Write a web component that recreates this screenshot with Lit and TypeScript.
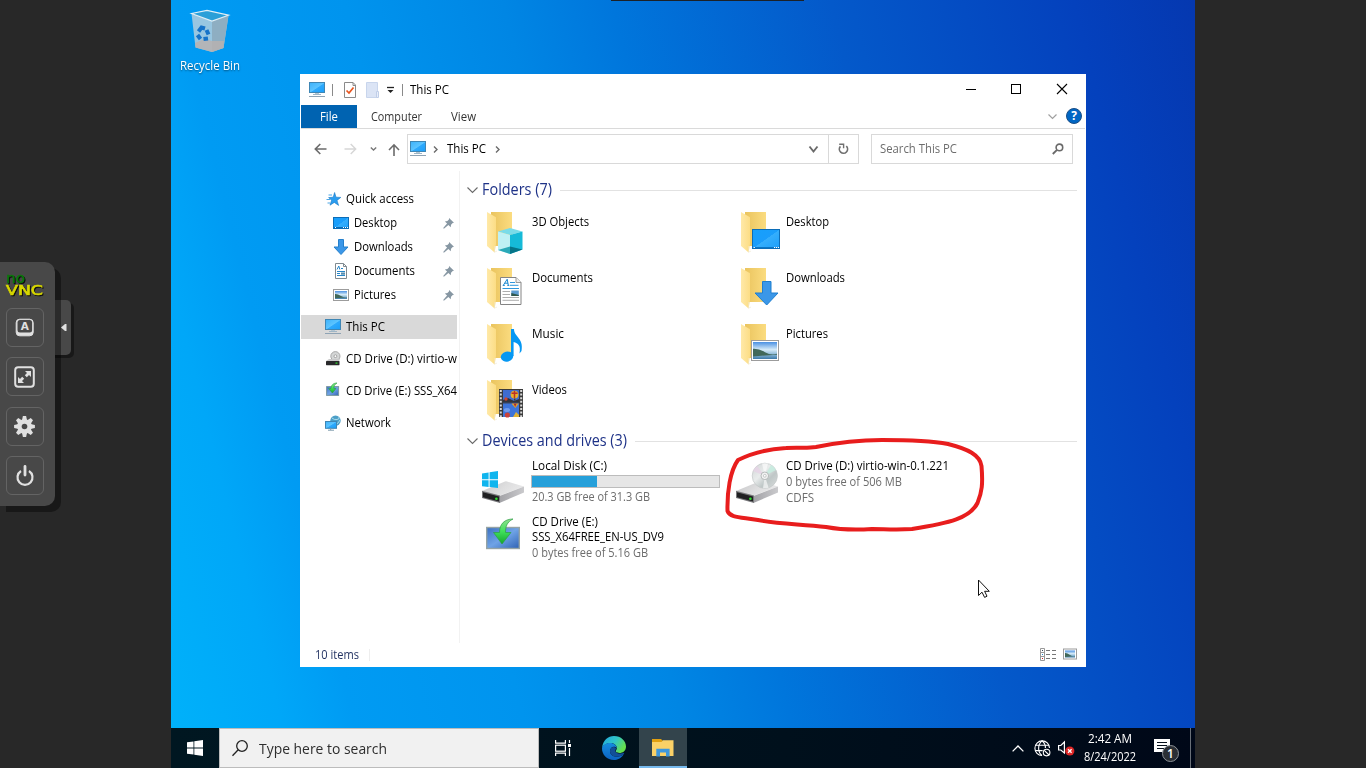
import { LitElement, html, svg, css } from "lit";
import { customElement, property } from "lit/decorators.js";

/** Text label condensed horizontally so that it occupies the given width. */
@customElement("ui-label")
class UiLabel extends LitElement {
  @property() text = "";
  @property({ type: Number }) w = 0;
  static styles = css`
    :host { display: inline-block; white-space: pre; }
    div { display: flex; justify-content: flex-start; }
    span { flex: none; transform-origin: 0 50%; }
  `;
  render() { return html`<div style="width:${this.w}px"><span>${this.text}</span></div>`; }
  updated() {
    const s = this.renderRoot.querySelector("span") as HTMLElement;
    s.style.transform = "none";
    const n = s.getBoundingClientRect().width;
    if (this.w && n) s.style.transform = `scaleX(${this.w / n})`;
  }
}

const L = (text: string, w: number) => html`<ui-label .text=${text} .w=${w}></ui-label>`;

const folderBack = svg`
  <path d="M11 4H32V38H11z" fill="url(#fb)"/>
  <path d="M7 4L16 9.2V36L14.6 44.4L7 38z" fill="url(#ff)"/>
  <path d="M14.6 38V44.2L17 43" fill="none" stroke="#efe6cc" stroke-width=".6"/>`;

const defs = svg`<defs>
  <linearGradient id="fb"><stop offset="0" stop-color="#eac45e"/><stop offset="1" stop-color="#fbdc80"/></linearGradient>
  <linearGradient id="ff"><stop offset="0" stop-color="#ffe9a8"/><stop offset="1" stop-color="#fcdd85"/></linearGradient>
  <linearGradient id="blue" x2="1" y2="1"><stop offset="0" stop-color="#16a0fb"/><stop offset=".5" stop-color="#1a9dfb"/><stop offset=".51" stop-color="#35aefc"/><stop offset="1" stop-color="#1c9ffa"/></linearGradient>
  <linearGradient id="lite" x2="1" y2="1"><stop offset="0" stop-color="#3db2fb"/><stop offset=".5" stop-color="#5cc4ff"/><stop offset=".55" stop-color="#2ea9fc"/><stop offset="1" stop-color="#1c9ffa"/></linearGradient>
  <linearGradient id="sky" x2="0" y2="1"><stop offset="0" stop-color="#4a90e2"/><stop offset=".45" stop-color="#d6ebf8"/><stop offset=".75" stop-color="#86b4d4"/><stop offset="1" stop-color="#3b78a8"/></linearGradient>
  <linearGradient id="top" x2="1" y2=".4"><stop offset="0" stop-color="#c4c4c6"/><stop offset=".6" stop-color="#dededf"/><stop offset="1" stop-color="#e8e8e9"/></linearGradient>
  <linearGradient id="side"><stop offset="0" stop-color="#a2a2a6"/><stop offset="1" stop-color="#cacacd"/></linearGradient>
  <linearGradient id="disc" x2="1" y2="1"><stop offset="0" stop-color="#d0d4d5"/><stop offset=".4" stop-color="#e9ecec"/><stop offset=".65" stop-color="#bfc7c7"/><stop offset="1" stop-color="#d9dddd"/></linearGradient>
  <linearGradient id="grn" x2="0" y2="1"><stop offset="0" stop-color="#8fe08f"/><stop offset=".5" stop-color="#3fe05a"/><stop offset="1" stop-color="#14a52c"/></linearGradient>
  <linearGradient id="scr" x2="1" y2="1"><stop offset="0" stop-color="#3a6fc0"/><stop offset=".5" stop-color="#6fa3e6"/><stop offset="1" stop-color="#2f62b4"/></linearGradient>
</defs>`;

const photo = (x: number, y: number, w: number, h: number, b = 1.6) => svg`
  <rect x=${x + 0.5} y=${y + 0.5} width=${w - 1} height=${h - 1} fill="#fff" stroke="#9c9c9c"/>
  <rect x=${x + b} y=${y + b} width=${w - 2 * b} height=${h - 2 * b} fill="url(#sky)"/>
  <path d="M${x + b} ${y + h * 0.42}Q${x + w * 0.28} ${y + h * 0.4} ${x + w * 0.5} ${y + h * 0.58}T${x + w - b} ${y + h * 0.66}V${y + h * 0.7}L${x + b} ${y + h * 0.78}z" fill="#41685a"/>`;

const driveBody = svg`
  <path d="M2 39L25 29.5Q26 29 27 29.5L44 34.5L19 44z" fill="url(#top)"/>
  <path d="M19.5 44L44 34.5V40.5L19.5 51z" fill="url(#side)"/>
  <path d="M2 38.8L20 43.6V51L2 46z" fill="#77777a"/>
  <path d="M3 40.2L19 44.6V49.6L3 45.2z" fill="#202022"/>
  <circle cx="16.4" cy="46.8" r="1.3" fill="#2fe02f"/>`;

const overlays: Record<string, unknown> = {
  cube: svg`<path d="M18 23.5L30 20L42.500 23.500L30 27z" fill="#7adbe8"/><path d="M18 23.500L30 27V46L18 42z" fill="#bff0f4"/><path d="M30 27L42.500 23.500V41.500L30 46z" fill="#16bad8"/><path d="M18 42L30 38.500V46z" fill="#2ba9b8"/><path d="M30 38.500L42.500 41.500L30 46z" fill="#067488"/>`,
  desktop: svg`<rect x="18.5" y="21.5" width="27" height="19" fill="url(#blue)" stroke="#0b6db8"/><path d="M19 39.5H45" stroke="#0a76c6"/><path d="M19.5 39.5h1.4M40 39.5h1.2M42 39.5h1.2M44 39.5h1" stroke="#fff"/>`,
  doc: svg`<path d="M20.5 13.5H36L41 18.5V40.5H20.5z" fill="#fff" stroke="#848484"/><path d="M36 13.5V18.5H41" fill="#eee" stroke="#848484" stroke-width=".8"/><path d="M23.3 21.3L27.2 15.2L28.3 21.3M24.7 19.2H28M22.8 21.4h2M27.3 21.4h2" fill="none" stroke="#1987d0" stroke-width="1"/><path d="M30 18.5H35M30 21.3H38.5M22.5 24.5H39" stroke="#2e97dd"/><path d="M22.5 27.5H30M22.5 30.5H30M22.5 33.5H39M22.5 36.3H39" stroke="#adadad"/><rect x="31.3" y="26.5" width="7.5" height="5.5" fill="#5d9bd0"/><path d="M31.3 29L38.8 31V32H31.3z" fill="#31584c"/>`,
  down: svg`<path d="M28.5 17.5H37V29H44L32.7 41L21 29H28.5z" fill="#3b97e8" stroke="#1f7fcf"/>`,
  music: svg`<ellipse cx="27" cy="36.6" rx="6.3" ry="5" transform="rotate(-14 27 36.6)" fill="#0698f3"/><path d="M31 9H34C34 17 44 18 41.5 31L39.5 33.5C41 25 38 23.5 33.6 22V36H31z" fill="#0698f3"/>`,
  photo: photo(17, 20, 28, 21, 2),
  video: svg`<rect x="19" y="13" width="24" height="28" fill="#3a3a3a"/><path d="M20.8 14V41M41.2 14V41" stroke="#d8d8d8" stroke-width="2" stroke-dasharray="2 1.6"/><rect x="23" y="14" width="16" height="12.4" fill="#3f6cd0"/><rect x="23" y="27.4" width="16" height="13.6" fill="#3d74da"/><path d="M23 24L28 22L34 25L39 23V26.4H23z" fill="#31343c"/><circle cx="34.5" cy="18.6" r="3.9" fill="#e7b02c"/><path d="M34.5 14.7V22M31.5 17.2H37.6" stroke="#bb3028" stroke-width="1.5"/><path d="M34 22.4h1.4v2h-1.4z" fill="#4b3a1c"/><circle cx="26" cy="23" r="1.7" fill="#d0452f"/><path d="M31.5 27.4H38.8L35.3 32z" fill="#dfa32e"/><path d="M33.6 27.4L35.2 31L36.6 27.4" fill="#ab2e28"/><ellipse cx="27" cy="34" rx="3.2" ry="2" fill="#6f9bee"/><circle cx="27.4" cy="39" r="2.6" fill="#c9423a"/><path d="M33 41L36 36L39 39V41z" fill="#dfb338"/>`,
};

const big = (kind: string) => {
  let body: unknown;
  if (kind === "disk")
    body = svg`${driveBody}<path d="M2 21.4L8.6 20.4V27.2H2zM9.6 20.2L18 19V27.2H9.6zM2 28.2H8.6V35L2 34.2zM9.6 28.2H18V36L9.6 35z" fill="#10b5ee"/>`;
  else if (kind === "cd")
    body = svg`${driveBody}<circle cx="30.8" cy="23.8" r="12.6" fill="url(#disc)" stroke="#c3c7c7" stroke-width=".7"/><path d="M30.8 23.8L19 19A12.6 12.6 0 0 1 23 14z" fill="#e6d3e6" opacity=".8"/><path d="M30.8 23.8L37 13A12.6 12.6 0 0 1 42 18z" fill="#c8ece0" opacity=".9"/><path d="M30.8 23.8L28 11.5A12.6 12.6 0 0 1 34 11.6zM30.8 23.8L29 36.2A12 12 0 0 0 34.6 35.8z" fill="#fff" opacity=".6"/><circle cx="30.8" cy="23.8" r="3.8" fill="#f2f2f2" stroke="#a8adad" stroke-width=".8"/><circle cx="30.8" cy="23.8" r="1.4" fill="#fff" stroke="#b0b4b4" stroke-width=".7"/>`;
  else if (kind === "install")
    body = svg`<rect x="6.7" y="19.5" width="32.6" height="21" fill="url(#scr)" stroke="#95a3a5" stroke-width="1.4"/><path d="M33 11C25 11 19.5 15.5 19.5 24.500H13.5L22 36L31 24.500H25.5C25.5 18.500 27 14 33 11z" fill="url(#grn)" stroke="#2d9e44" stroke-width=".7"/>`;
  else body = svg`${folderBack}${overlays[kind]}`;
  return html`<svg class="big" viewBox="0 0 48 48">${defs}${body}</svg>`;
};

const pcArt = svg`<rect x=".5" y=".5" width="15" height="10" fill="url(#lite)" stroke="#3f86b4"/><path d="M6 11.5h4" stroke="#b4c6d2"/><path d="M4 12.500h8" stroke="#9fb6c6"/><path d="M0 14.500h16" stroke="#8fa3b4"/>`;

const small = (kind: string) => {
  const art: Record<string, unknown> = {
    pc: pcArt,
    star: svg`<path d="M9.6 1.5L11 6.2L15.8 6.4L12 9.4L13.6 14.4L9.3 11.4L5 14.2L6.6 9.3L3.6 6.6L8.2 6.2z" fill="#2a9df0" stroke="#1577c4" stroke-width=".6"/><path d="M3.5 4H7M1.5 8.5H5M2.5 12H5" stroke="#4aa6e6"/>`,
    desktop: svg`<rect x=".5" y="2.5" width="15" height="11" fill="url(#blue)" stroke="#0b6db8"/><path d="M1 12.5h14" stroke="#0a6cb6"/><path d="M2 12.5h1M10 12.5h1M12 12.5h1M14 12.5h1" stroke="#fff"/>`,
    down: svg`<path d="M5.5 .5H10.5V8H15L8 15.5L1 8H5.5z" fill="#3b97e8" stroke="#2580cc"/>`,
    doc: svg`<path d="M2.5 .5H10.5L13.5 3.5V15.5H2.5z" fill="#fff" stroke="#808a90"/><path d="M10.5 .5V3.5H13.5" fill="none" stroke="#808a90"/><path d="M4 6.5L5.8 3L6.8 6.5M8 5.5H10M4 8.5H12M4 10.5H7M4 12.5H12" fill="none" stroke="#2786c8"/><rect x="8" y="9.5" width="4" height="2.2" fill="#5a8fb0"/>`,
    photo: photo(0, 2, 16, 12, 2),
    cd: svg`<circle cx="10.4" cy="5.2" r="4.6" fill="#d4d6d6" stroke="#999" stroke-width=".8"/><circle cx="10.4" cy="5.2" r="1.4" fill="#fff" stroke="#888" stroke-width=".7"/><path d="M1 10L4 8H15L14 10z" fill="#c9c9ca"/><rect x="1" y="10" width="13.5" height="4.2" rx=".6" fill="#29292b"/><rect x="10.5" y="11.5" width="2" height="1.2" fill="#2fe02f"/>`,
    install: svg`<rect x="1.6" y="3.600" width="12" height="8.8" fill="url(#scr)" stroke="#7b98a0"/><path d="M12 0C8.5 0 6 2 6 5.500H3.6L7.4 10L11 5.500H8.8C8.8 3 9.5 1.500 12 0z" fill="url(#grn)" stroke="#2a9c40" stroke-width=".6"/>`,
    net: svg`<circle cx="10.5" cy="5.6" r="5.2" fill="#4c9fc8"/><path d="M7 3Q9 5 12 4.5T14 2M10 10Q14 8 15 5" stroke="#a9dcec" fill="none"/><rect x=".5" y="6.5" width="11" height="6.8" fill="url(#lite)" stroke="#3f86b4"/><path d="M3 15.2h6M5.7 13v2" stroke="#7f9bad"/>`,
  };
  return html`<svg class="ic" viewBox="0 0 16 16">${defs}${art[kind]}</svg>`;
};

const pin = html`<svg class="pin" viewBox="0 0 10 10"><path d="M5.5 0L10 4.3L8.8 4.6L7.3 6.2L7 8.3L4.9 6.300L.8 9.8L.2 9.2L3.700 5.1L1.7 3.1L4 2.8L5.4 1.3z" fill="#8797a3"/></svg>`;

const nav = [
  { ic: "star", t: "Quick access", w: 68 },
  { ic: "desktop", t: "Desktop", w: 43, sub: true },
  { ic: "down", t: "Downloads", w: 59, sub: true },
  { ic: "doc", t: "Documents", w: 61, sub: true },
  { ic: "photo", t: "Pictures", w: 42, sub: true },
  { ic: "pc", t: "This PC", w: 39, gap: true, sel: true },
  { ic: "cd", t: "CD Drive (D:) virtio-w", w: 111, gap: true },
  { ic: "install", t: "CD Drive (E:) SSS_X64", w: 111, gap: true },
  { ic: "net", t: "Network", w: 45, gap: true },
];

const folders: [string, string, number][] = [
  ["cube", "3D Objects", 57], ["desktop", "Desktop", 43],
  ["doc", "Documents", 61], ["down", "Downloads", 59],
  ["music", "Music", 32], ["photo", "Pictures", 42],
  ["video", "Videos", 35],
];

@customElement("app-root")
class AppRoot extends LitElement {
  static styles = css`
    :host { display: flex; position: relative; width: 1366px; height: 768px; overflow: hidden; background: #282828; font: 12px/16px "Open Sans", "Noto Sans", sans-serif; color: #000; }
    * { box-sizing: border-box; }
    svg { display: block; overflow: visible; flex: none; }
    .desk { position: relative; width: 1024px; height: 768px; margin-left: 171px; display: flex; flex-direction: column; justify-content: space-between;
      background: linear-gradient(76deg, #00b2fa 0%, #00a7f8 10%, #009bf3 16%, #0094ee 30%, #0086e4 43%, #0076dc 52%, #0459ca 70%, #0441bd 90%, #0538b0 100%); }
    .topline { position: absolute; left: 440px; top: 0; width: 193px; height: 1px; background: #1c2127; }
    .bin { width: 78px; padding-top: 8px; display: flex; flex-direction: column; align-items: center; color: #fff; }
    .bin svg { width: 40px; height: 46px; margin-bottom: 4px; }
    .bin ui-label { text-shadow: 0 1px 2px rgba(0,0,0,.5); }
    .win { position: absolute; left: 129px; top: 74px; width: 786px; height: 593px; background: #fff; display: flex; flex-direction: column; padding: 0 1px; }
    .title { height: 31px; display: flex; align-items: center; padding-left: 8px; }
    .ic { width: 16px; height: 16px; }
    .vsep { width: 1px; height: 12px; background: #8a8a8a; }
    .sep-a { margin: 0 10px 0 7px; }
    .sep-b { margin: 0 7px 0 8px; }
    .folder-btn { margin-left: 9px; }
    .more-btn { margin-left: 7px; }
    .ctl { margin-left: auto; display: flex; align-items: center; padding: 0 18px 2px 0; gap: 35px; }
    .close { margin-left: 1px; }
    .tabs { height: 24px; display: flex; align-items: stretch; border-bottom: 1px solid #dadada; }
    .tabs > ui-label { line-height: 24px; color: #333; }
    .view-tab { margin-left: 29px; }
    .file { background: #0063b1; color: #fff; width: 56px; padding-left: 19px; line-height: 24px; height: 23px; margin-right: 14px; }
    .help { margin-left: auto; display: flex; align-items: center; gap: 9px; padding: 0 3px 1px 0; }
    .q { width: 16px; height: 16px; border-radius: 8px; background: #0066c4; border: 1px solid #1b4e86; color: #fff; font-weight: 700; line-height: 14px; text-align: center; }
    .addr { display: flex; align-items: center; padding: 5px 12px 1px 12px; height: 36px; }
    .back { margin-left: 1px; }
    .fwd { margin-left: 17px; }
    .hist { margin-left: 13px; }
    .up { margin: 0 7px 0 11px; }
    .crumb-a { margin: 0 9px 0 7px; }
    .crumb-b { margin-left: 9px; }
    .box { height: 30px; border: 1px solid #d9d9d9; display: flex; align-items: center; }
    .path { width: 452px; padding-left: 2px; }
    .path .end { margin-left: auto; display: flex; align-items: center; height: 100%; }
    .refresh { margin-left: 10px; width: 30px; height: 28px; border-left: 1px solid #d9d9d9; display: flex; align-items: center; justify-content: center; }
    .search { margin-left: 12px; width: 202px; padding: 0 8px; justify-content: space-between; color: #6d6d6d; }
    .main { flex: 1; display: flex; padding-top: 6px; min-height: 0; }
    .nav { width: 156px; padding-top: 16px; overflow: hidden; }
    .row { height: 24px; display: flex; align-items: center; padding-left: 24px; gap: 5px; white-space: nowrap; }
    .row.sub { padding-left: 32px; }
    .row.gap { margin-top: 8px; }
    .row.sel { background: #d9d9d9; }
    .pin { width: 11px; height: 11px; margin-left: auto; margin-right: 3px; }
    .split { width: 1px; margin-left: 2px; background: #f2f2f2; }
    .content { flex: 1; padding: 8px 8px 0 7px; }
    .gh { height: 22px; display: flex; align-items: center; gap: 4px; font-size: 15.5px; line-height: 20px; color: #1e3287; }
    .gh ui-label { margin-top: -2px; }
    .gh i { flex: 1; height: 1px; background: #e2e2e2; margin-left: 4px; margin-top: 1px; }
    .gh.two { margin-top: -2px; }
    .tiles { display: grid; grid-template-columns: 254px 254px; grid-auto-rows: 56px; padding-left: 13px; }
    .tiles.f { padding-top: 7px; }
    .tile { display: flex; gap: 4px; }
    .big { width: 48px; height: 48px; }
    .tx { display: flex; flex-direction: column; padding-top: 6px; white-space: nowrap; }
    .g { color: #6d6d6d; }
    .tight { line-height: 15px; margin: -1px 0 1px; }
    .bar { width: 189px; height: 13px; border: 1px solid #bcbcbc; background: #e6e6e6; margin: 1px 0 1px -1px; }
    .bar div { height: 100%; background: #26a0da; }
    .status { height: 24px; display: flex; align-items: center; padding: 0 8px 1px 14px; color: #1f2f5f; }
    .status ui-label { margin-top: 1px; }
    .status .vsep { background: #eee; margin-left: 10px; }
    .views { margin-left: auto; display: flex; gap: 7px; align-items: center; padding-bottom: 1px; }
    .task { height: 40px; display: flex; background: linear-gradient(90deg, #001721, #00101c 60%, #000818); color: #fff; }
    .cell { width: 48px; display: flex; align-items: center; justify-content: center; }
    .cell.wide { width: 52px; padding-left: 2px; }
    .cell.on { background: #33444c; border-bottom: 2px solid #76b9ed; padding-top: 2px; }
    .tsearch { width: 320px; background: #f1f1f1; border: 1px solid #bcbcbc; display: flex; align-items: center; gap: 11px; padding-left: 12px; font-size: 15px; line-height: 20px; color: #2e2e2e; }
    .tray { margin-left: auto; display: flex; align-items: center; }
    .globe { margin-left: 10px; }
    .vol { margin-left: 7px; }
    .clock { display: flex; flex-direction: column; align-items: center; line-height: 18px; width: 56px; margin-left: 8px; }
    .note { position: relative; margin-left: 16px; width: 18px; height: 18px; }
    .badge { position: absolute; left: 8px; top: 6px; width: 17px; height: 17px; border-radius: 9px; background: #2b2f35; border: 1px solid #8d9298; font-size: 12px; line-height: 15px; text-align: center; font-weight: 600; }
    .peek { align-self: stretch; width: 1px; background: #6a7078; margin: 0 4px 0 18px; }
    .over { position: absolute; left: 0; top: 0; pointer-events: none; }
    .vnc { position: absolute; left: 0; top: 262px; width: 55px; height: 244px; border-radius: 0 10px 10px 0; background: #484848; box-shadow: 6px 6px 0 rgba(0,0,0,.4); padding: 12px 0 0 6px; display: flex; flex-direction: column; }
    .handle { position: absolute; left: 50px; top: 300px; width: 21px; height: 55px; border-radius: 0 5px 5px 0; background: #484848; box-shadow: 3px 3px 0 rgba(0,0,0,.4); display: flex; align-items: center; justify-content: flex-end; padding-right: 4px; }
    .logo { height: 34px; display: flex; flex-direction: column; font-family: "DejaVu Sans", sans-serif; }
    .logo svg { filter: drop-shadow(1px 1px 0 #0c0c0c); }
    .b { width: 38px; height: 39px; border: 1px solid #646464; border-radius: 6px; display: flex; align-items: center; justify-content: center; margin-bottom: 10.6px; flex: none; padding-right: 1px; }
  `;

  chev(w: number, h: number, c: string, s = 1.2) {
    return html`<svg width=${w} height=${h} viewBox="0 0 ${w} ${h}"><path d="M.5 .5L${w / 2} ${h - 0.5}L${w - 0.5} .5" fill="none" stroke=${c} stroke-width=${s}/></svg>`;
  }

  gt() {
    return html`<svg width="5" height="7" viewBox="0 0 5 7"><path d="M1 .5L4 3.5L1 6.5" fill="none" stroke="#6a6a6a" stroke-width="1.4"/></svg>`;
  }

  titleBar() {
    return html`<div class="title">
      ${small("pc")}
      <div class="vsep sep-a"></div>
      <svg width="14" height="16" viewBox="0 0 14 16"><path d="M1.5.5H10L12.5 3V15.5H1.5z" fill="#fff" stroke="#8a8a8a"/><path d="M10 .5V3.5H12.5" fill="none" stroke="#8a8a8a"/><path d="M3.500 8.5L6 11L10.500 5.5" fill="none" stroke="#e8551f" stroke-width="1.7"/></svg>
      <svg class="folder-btn" width="14" height="16" viewBox="0 0 14 16"><path d="M.5.5H11.5V15.5H.5z" fill="#dbe4f5" stroke="#c8d5ec"/><path d="M10.5 9.5H12.5V15.5H10.5z" fill="#e8eefa" stroke="#c0cee8"/></svg>
      <svg class="more-btn" width="7" height="8" viewBox="0 0 7 8"><path d="M0 1.5H7" stroke="#222" stroke-width="1.3"/><path d="M.5 4H6.5L3.5 7z" fill="#222"/></svg>
      <div class="vsep sep-b"></div>
      ${L("This PC", 39)}
      <div class="ctl">
        <svg width="10" height="10"><path d="M0 5.5H10" stroke="#000"/></svg>
        <svg width="10" height="10"><rect x=".5" y=".5" width="9" height="9" fill="none" stroke="#000"/></svg>
        <svg class="close" width="10" height="10"><path d="M0 0L10 10M10 0L0 10" stroke="#000" stroke-width="1.1"/></svg>
      </div>
    </div>
    <div class="tabs">
      <div class="file">${L("File", 18)}</div>${L("Computer", 51)}<ui-label class="view-tab" .text=${"View"} .w=${25}></ui-label>
      <div class="help">${this.chev(9, 5, "#a0a0a0")}<div class="q">?</div></div>
    </div>`;
  }

  address() {
    return html`<div class="addr">
      <svg class="back" width="13" height="12" viewBox="0 0 13 12"><path d="M12.5 6H1.5M6.3 1L1.3 6L6.3 11" fill="none" stroke="#6b6b6b" stroke-width="1.6"/></svg>
      <svg class="fwd" width="13" height="12" viewBox="0 0 13 12"><path d="M.5 6H11.5M6.7 1L11.7 6L6.7 11" fill="none" stroke="#d6d6d6" stroke-width="1.4"/></svg>
      <svg class="hist" width="7" height="4" viewBox="0 0 7 4"><path d="M.8.5L3.5 3L6.2.5" fill="none" stroke="#777" stroke-width="1.4"/></svg>
      <svg class="up" width="12" height="13" viewBox="0 0 12 13"><path d="M6 13V2M1 7L6 1.800L11 7" fill="none" stroke="#6b6b6b" stroke-width="1.6"/></svg>
      <div class="box path">${small("pc")}
        <span class="crumb-a">${this.gt()}</span>${L("This PC", 39)}<span class="crumb-b">${this.gt()}</span>
        <div class="end">${this.chev(9, 6, "#6a6a6a", 1.9)}
          <div class="refresh"><svg width="11" height="12" viewBox="0 0 11 12"><path d="M2.400 3.400A4.1 4.1 0 1 0 8.300 3.200" fill="none" stroke="#707070" stroke-width="1.7"/><path d="M1.200 1.300H5.600V5.200" fill="none" stroke="#707070" stroke-width="1.4"/></svg></div>
        </div>
      </div>
      <div class="box search">${L("Search This PC", 77)}<svg width="12" height="12" viewBox="0 0 12 12"><circle cx="7.4" cy="4.4" r="3.3" fill="none" stroke="#6a6a6a" stroke-width="1.6"/><path d="M5 6.8L.8 11" stroke="#6a6a6a" stroke-width="1.9"/></svg></div>
    </div>`;
  }

  group(t: string, w: number, cls = "") {
    return html`<div class="gh ${cls}">${this.chev(11, 6, "#6a6a6a", 1.1)}${L(t, w)}<i></i></div>`;
  }

  render() {
    return html`
    <div class="desk">
      <div class="topline"></div>
      <div class="bin">
        <svg viewBox="0 0 40 46">
          <path d="M1.5 5.5L5.5 39.5L22 44L33.5 40L38.5 7.5L22 13z" fill="#a9cbdf" opacity=".9"/>
          <path d="M22 13L38.5 7.5L33.5 40L22 44z" fill="#8eaec2"/>
          <path d="M5 35L14 31L22 33L34 33L33.5 40L22 44L5.5 39.5z" fill="#b7b1b0" opacity=".85"/>
          <path d="M1.5 5.5L17 2.3L38.5 7.2L22 13z" fill="#2b9fd8" stroke="#e1eff6" stroke-width="1.2"/>
          <g fill="none" stroke="#1673c9" stroke-width="4"><path d="M8.5 23.5L11.5 19.5L15 20.5"/><path d="M16.5 22L18.5 26.5"/><path d="M18 30.5L13.5 31"/><path d="M10.5 31L7.5 27"/></g>
        </svg>${L("Recycle Bin", 60)}
      </div>

      <div class="win">
        ${this.titleBar()}
        ${this.address()}
        <div class="main">
          <div class="nav">${nav.map(n => html`<div class="row ${n.sub ? "sub" : ""} ${n.gap ? "gap" : ""} ${n.sel ? "sel" : ""}">${small(n.ic)}${L(n.t, n.w)}${n.sub ? pin : ""}</div>`)}</div>
          <div class="split"></div>
          <div class="content">
            ${this.group("Folders (7)", 70)}
            <div class="tiles f">${folders.map(f => html`<div class="tile">${big(f[0])}<div class="tx">${L(f[1], f[2])}</div></div>`)}</div>
            ${this.group("Devices and drives (3)", 145, "two")}
            <div class="tiles">
              <div class="tile">${big("disk")}<div class="tx">${L("Local Disk (C:)", 75)}<div class="bar"><div style="width:35%"></div></div><span class="g">${L("20.3 GB free of 31.3 GB", 118)}</span></div></div>
              <div class="tile">${big("cd")}<div class="tx">${L("CD Drive (D:) virtio-win-0.1.221", 163)}<span class="g">${L("0 bytes free of 506 MB", 116)}</span><span class="g">${L("CDFS", 28)}</span></div></div>
              <div class="tile">${big("install")}<div class="tx">${L("CD Drive (E:)", 66)}<ui-label class="tight" .text=${"SSS_X64FREE_EN-US_DV9"} .w=${132}></ui-label><span class="g">${L("0 bytes free of 5.16 GB", 116)}</span></div></div>
            </div>
          </div>
        </div>
        <div class="status">${L("10 items", 44)}<div class="vsep"></div>
          <div class="views">
            <svg width="16" height="13" viewBox="0 0 16 13"><path d="M.5.5H4.5V12.5H.5zM.5 4.5H4.5M.5 8.5H4.5" fill="none" stroke="#999"/><path d="M6 2.5H10M12 2.5H16M6 6.5H10M12 6.5H16M6 10.5H10M12 10.5H16" stroke="#777"/><path d="M2 2.5h1" stroke="#345"/><path d="M2 6.5h1" stroke="#28c"/><path d="M2 10.5h1" stroke="#c22"/></svg>
            <svg width="14" height="12" viewBox="0 0 14 12">${defs}${photo(0, 0.5, 14, 11, 2)}</svg>
          </div>
        </div>
      </div>

      <div class="task">
        <div class="cell"><svg width="16" height="16" viewBox="0 0 16 16"><path d="M0 2.3L6.5 1.4V7.5H0zM7.3 1.3L16 0V7.5H7.3zM0 8.4H6.5V14.6L0 13.7zM7.3 8.4H16V16L7.3 14.8z" fill="#fff"/></svg></div>
        <div class="tsearch"><svg width="16" height="17" viewBox="0 0 16 17"><circle cx="10" cy="6" r="5.3" fill="none" stroke="#222" stroke-width="1.3"/><path d="M6.2 9.8L.5 15.8" stroke="#222" stroke-width="1.3"/></svg>${L("Type here to search", 128)}</div>
        <div class="cell"><svg width="16" height="16" viewBox="0 0 16 16"><g fill="none" stroke="#fff" stroke-width="1.2"><path d="M.6 0V3.2H10.4V0M.6 16V13.2H10.4V16"/><rect x=".6" y="5.2" width="9.8" height="6"/><path d="M14.5 0V3M14.5 8V16"/></g><rect x="13" y="4" width="3" height="3" fill="#fff"/></svg></div>
        <div class="cell wide"><svg width="24" height="24" viewBox="0 0 24 24">
          <defs><linearGradient id="e1" x2="1" y2=".5"><stop offset="0" stop-color="#1fa5e2"/><stop offset=".55" stop-color="#30c5c8"/><stop offset="1" stop-color="#66e04c"/></linearGradient><linearGradient id="e2" x2="0" y2="1"><stop offset="0" stop-color="#158ce0"/><stop offset="1" stop-color="#0c62c0"/></linearGradient></defs>
          <path d="M0 12C1 4 6 0 12 0C19 0 24 5 24 10.5C24 15 20.5 17 17.5 17C14 17 13.2 15.6 14 14.6C16.5 11 13 7 9 7C5 7 1 9 0 12z" fill="url(#e1)"/>
          <path d="M0 12C1 8.5 4.5 7 8 7C12 7 14.6 9.5 14.7 12C12 9 8 11.5 8 15C8 20 14 23 21.5 18.5C19 22.5 15.5 24 12 24C5 24 -.3 18.5 0 12z" fill="url(#e2)"/>
          <path d="M8 15C8 11.5 11.5 9.8 14 12C14 14 12.6 14.6 13.6 16C15.5 18 19.5 17.8 22 16.8C22.5 17 22 18 21.5 18.5C14 23 8 20 8 15z" fill="#124f98"/></svg></div>
        <div class="cell on"><svg width="22" height="18" viewBox="0 0 22 18"><path d="M0 0H9L10.5 1.5V4H0z" fill="#e2a010"/><path d="M0 3H9.5L11 1.2H21.5V17H0z" fill="#fbd167"/><path d="M4.3 17.5V9.8H17.6V17.5H14V13.5H8V17.5z" fill="#3e97dd"/></svg></div>
        <div class="tray">
          <svg width="12" height="7" viewBox="0 0 12 7"><path d="M.6 6.4L6 1L11.4 6.4" fill="none" stroke="#fff" stroke-width="1.3"/></svg>
          <svg class="globe" width="17" height="17" viewBox="0 0 17 17"><g fill="none" stroke="#fff" stroke-width="1.1"><path d="M8 15.5A7.3 7.3 0 1 1 15.5 8"/><path d="M8 15.5C3.5 12 3.5 4.5 8 .8C10.8 3 11.5 5.5 11.4 8M1.2 5.3H15M1.2 10.6H8.6"/><circle cx="12.6" cy="12.6" r="3.3"/><path d="M10.3 10.3L15 15"/></g></svg>
          <svg class="vol" width="16" height="16" viewBox="0 0 16 16"><path d="M.6 5.5H2.8L6.4 2V13L2.8 10H.6z" fill="none" stroke="#fff" stroke-width="1.2"/><circle cx="11.8" cy="11" r="4.6" fill="#dc2626"/><path d="M10 9.2L13.6 12.8M13.6 9.2L10 12.8" stroke="#fff" stroke-width="1.3"/></svg>
          <div class="clock">${L("2:42 AM", 44)}${L("8/24/2022", 52)}</div>
          <div class="note"><svg width="16" height="16" viewBox="0 0 16 16"><path d="M0 0H16V13H11V16L8 13H0z" fill="#fff"/><path d="M3 3.5H13M3 6.5H13M3 9.5H10" stroke="#06101c"/></svg><div class="badge">1</div></div>
          <div class="peek"></div>
        </div>
      </div>
    </div>

    <svg class="over" width="1366" height="768" viewBox="0 0 1366 768">
      <path d="M738 460C750 454 768 449 786 448C797 447 806 448.500 816 447C840 442 862 440 882 440C906 440 932 441 948 444C968 449 980 455 981.500 466C983 484 982 492 977.500 503C970 518 950 523 912 529C895 530 884 529 872 529C858 530 842 530 826 527C800 524 778 524 758 520C742 517 730 518 727.500 511C727 492 730 471 738 460z" fill="none" stroke="#e81d1d" stroke-width="4" stroke-linejoin="round"/>
      <path d="M978.500 580V595.500L982 592.200L984.600 597.400L987 596.200L984.600 591.300H989.300z" fill="#fff" stroke="#111" stroke-width="1"/>
    </svg>

    <div class="handle"><svg width="6" height="7" viewBox="0 0 6 7"><path d="M0 3.500L4 0H5.500V7H4z" fill="#e0e0e0"/></svg></div>
    <div class="vnc">
      <div class="logo">
        <svg width="40" height="10" viewBox="0 0 40 10"><text x="0" y="9" font-size="14.500" textLength="19" lengthAdjust="spacingAndGlyphs" fill="#0a7a0a" stroke="#0a7a0a" stroke-width=".4">no</text></svg>
        <svg width="40" height="14" viewBox="0 0 40 14"><text x="0" y="11.200" font-size="13.500" textLength="37" lengthAdjust="spacingAndGlyphs" fill="#d8d800" stroke="#d8d800" stroke-width=".7">VNC</text></svg>
      </div>
      <div class="b"><svg width="20" height="19" viewBox="0 0 20 19"><rect x="1.200" y="1.200" width="17" height="16.600" rx="3.500" fill="#e0e0e0" stroke="#e0e0e0"/><rect x="2.500" y="2" width="14.600" height="12.500" rx="2.500" fill="#484848"/><text x="9.800" y="12" text-anchor="middle" font-family="DejaVu Sans" font-weight="700" font-size="10.500" fill="#e0e0e0">A</text></svg></div>
      <div class="b"><svg width="21" height="22" viewBox="0 0 21 22"><rect x="1.200" y="1.200" width="18.600" height="19.600" rx="3" fill="none" stroke="#e0e0e0" stroke-width="2"/><path d="M11 5H17V11L15 9L12.800 11.200L10.800 9.200L13 7zM10 17H4V11L6 13L8.200 10.800L10.200 12.800L8 15z" fill="#e0e0e0"/></svg></div>
      <div class="b"><svg width="21" height="21" viewBox="-10.500 -10.500 21 21">${[0, 45, 90, 135].map(a => svg`<path d="M-1.600 -10.400H1.600L2.600 -6V6L1.600 10.400H-1.600L-2.600 6V-6z" transform="rotate(${a})" fill="#e0e0e0"/>`)}<circle r="7.300" fill="#e0e0e0"/><circle r="2.800" fill="#484848"/></svg></div>
      <div class="b"><svg width="18" height="22" viewBox="0 0 18 22"><path d="M5 6A7.500 7.500 0 1 0 13 6" fill="none" stroke="#e0e0e0" stroke-width="2.200"/><path d="M9 1.500V10" stroke="#e0e0e0" stroke-width="2.800" stroke-linecap="round"/></svg></div>
    </div>`;
  }
}
